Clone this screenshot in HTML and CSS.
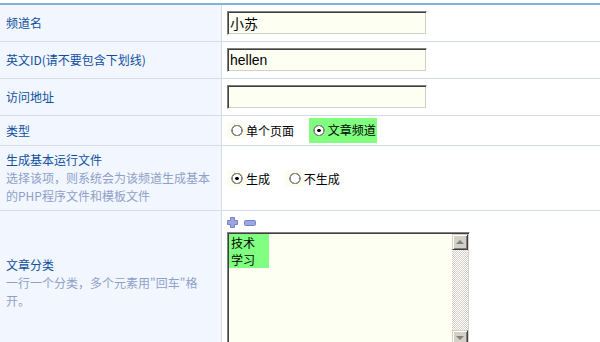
FILE: index.html
```html
<!DOCTYPE html>
<html lang="zh-CN">
<head>
  <meta charset="UTF-8">
  <title>频道设置</title>
  <link rel="stylesheet" href="styles.css">
</head>
<body>

  <table class="form">
    <tr class="row-text">
      <th>频道名</th>
      <td><input class="txt" type="text" value="小苏"></td>
    </tr>
    <tr class="row-text">
      <th>英文ID(请不要包含下划线)</th>
      <td><input class="txt" type="text" value="hellen"></td>
    </tr>
    <tr class="row-text">
      <th>访问地址</th>
      <td><input class="txt" type="text" value=""></td>
    </tr>
    <tr class="row-type">
      <th>类型</th>
      <td>
        <label class="opt"><input type="radio" name="type">单个页面</label>
        <label class="opt on"><input type="radio" name="type" checked>文章频道</label>
      </td>
    </tr>
    <tr class="row-gen">
      <th>生成基本运行文件<span class="hint">选择该项，则系统会为该频道生成基本的PHP程序文件和模板文件</span></th>
      <td>
        <label class="opt"><input type="radio" name="gen" checked>生成</label>
        <label class="opt"><input type="radio" name="gen">不生成</label>
      </td>
    </tr>
    <tr class="row-cat">
      <th>文章分类<span class="hint">一行一个分类，多个元素用"回车"格开。</span></th>
      <td>
        <div class="tools">
          <svg width="11" height="11" viewBox="0 0 11 11"><path d="M3.5 0.5h4v3h3v4h-3v3h-4v-3h-3v-4h3z" fill="#9ca6e0" stroke="#7682c8"/></svg>
          <svg width="12" height="6" viewBox="0 0 12 6"><rect x="0.5" y="0.5" width="11" height="5" rx="1" fill="#9ca6e0" stroke="#7682c8"/></svg>
        </div>
        <div class="textarea">
          <div class="ta-text"><div class="hl">技术<br>学习</div></div>
          <div class="scrollbar">
            <span class="sb-btn up"></span>
            <span class="sb-track"></span>
            <span class="sb-btn down"></span>
          </div>
        </div>
      </td>
    </tr>
  </table>

</body>
</html>
```

FILE: styles.css
```css
body {
  margin: 0;
  padding-top: 3px;
  font: 12px/18px "Noto Sans CJK SC", "Liberation Sans", sans-serif;
  background: #fff;
}

/* tableau du formulaire */
.form {
  width: 100%;
  border-collapse: collapse;
  border-top: 2px solid #80b4d7;
}

.form th,
.form td {
  border-bottom: 1px solid #d6dce6;
  vertical-align: middle;
}

.form th {
  width: 209px;
  padding: 0 6px;
  background: #f2f7ff;
  border-right: 1px solid #d6dce6;
  font-weight: normal;
  text-align: left;
  color: #0f4f9e;
}

.form td {
  padding: 0 5px;
  color: #000;
}

.row-text th,
.row-text td { height: 36px; }

.row-type th,
.row-type td { height: 29px; }

.row-gen th,
.row-gen td { height: 64px; }

.hint {
  display: block;
  color: #8fa0c8;
}

/* champs texte */
.txt {
  display: block;
  width: 200px;
  height: 24px;
  box-sizing: border-box;
  margin: 0;
  padding: 0 2px;
  border: 1px solid;
  border-color: #808080 #fff #fff #808080;
  box-shadow: inset 1px 1px 0 #404040, inset -1px -1px 0 #d4d0c8;
  background: #fdfff3;
  font: 14px "Liberation Sans", "Noto Sans CJK SC", sans-serif;
  color: #000;
}

/* boutons radio */
.opt {
  display: inline-flex;
  align-items: center;
  margin-right: 12px;
  vertical-align: middle;
}

.opt input {
  appearance: none;
  -webkit-appearance: none;
  width: 19px;
  height: 17px;
  margin: 0;
  border: 0;
  background-color: #fcfdee;
  background-image: radial-gradient(circle at 10px 8.5px, #fff 0 4px, #8a8a8a 4.5px 5.5px, transparent 6px);
}

.opt input:checked {
  background-image:
    radial-gradient(circle at 10px 8.5px, #000 0 1.5px, transparent 2px),
    radial-gradient(circle at 10px 8.5px, #fff 0 4px, #8a8a8a 4.5px 5.5px, transparent 6px);
}

.opt.on {
  background: #80ff80;
  padding: 3px 1px 4px 0;
}

.opt.on input { background-color: transparent; }

/* zone de texte des categories */
.row-cat td {
  padding-top: 6px;
  padding-bottom: 6px;
}

.tools {
  display: flex;
  align-items: center;
  gap: 6px;
  height: 11px;
  margin-bottom: 4px;
}

.textarea {
  display: flex;
  width: 243px;
  height: 116px;
  box-sizing: border-box;
  padding: 1px;
  border: 1px solid;
  border-color: #808080 #fff #fff #808080;
  box-shadow: inset 1px 1px 0 #404040, inset -1px -1px 0 #d4d0c8;
  background: #fdfff3;
}

.ta-text { flex: 1; }

.hl {
  width: 38px;
  padding: 0 0 0 2px;
  line-height: 17px;
  background: #80ff80;
}

.scrollbar {
  display: flex;
  flex-direction: column;
  width: 16px;
}

.sb-btn {
  position: relative;
  height: 16px;
  box-sizing: border-box;
  border: 1px solid;
  border-color: #d4d0c8 #404040 #404040 #d4d0c8;
  box-shadow: inset 1px 1px 0 #fff, inset -1px -1px 0 #808080;
  background: #d4d0c8;
}

.sb-btn::before {
  content: "";
  position: absolute;
  left: 3px;
  top: 5px;
  border-left: 4px solid transparent;
  border-right: 4px solid transparent;
  border-bottom: 4px solid #808080;
}

.sb-btn.down::before {
  border-bottom: 0;
  border-top: 4px solid #808080;
}

.sb-track {
  flex: 1;
  background: repeating-conic-gradient(#d4d0c8 0 25%, #fff 0 50%) 0 0 / 2px 2px;
}
```
